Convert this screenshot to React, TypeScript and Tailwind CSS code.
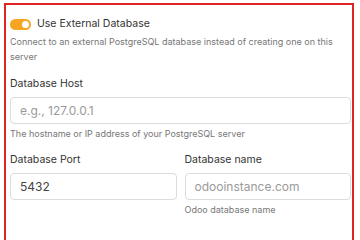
import React from "react";

function Field({ label, value, placeholder, help }: { label: string; value?: string; placeholder: string; help?: string }) {
  return (
    <div className="flex flex-col">
      <label className="text-[10.5px] leading-[14px] text-[#333]">{label}</label>
      <input
        readOnly
        defaultValue={value}
        placeholder={placeholder}
        className="mt-[6px] h-[27px] w-full rounded-[4px] border border-[#dcdcdc] bg-white px-[9px] text-[12px] text-[#444] placeholder:text-[#9a9a9a] outline-none"
      />
      {help && <p className="mt-[4px] text-[9px] leading-[12px] text-[#777]">{help}</p>}
    </div>
  );
}

export default function App() {
  return (
    <div className="h-[240px] overflow-hidden bg-white pl-1 pt-[3px]" style={{ fontFamily: "Inter, 'Noto Sans', sans-serif" }}>
      <div className="h-[260px] w-[350px] border-2 border-[#e02424] pl-1 pr-px pt-[12px]">
        <div className="flex h-[14px] items-center gap-[6px]">
          <span className="relative inline-block h-[11px] w-[21px] rounded-full bg-[#f5a524]">
            <span className="absolute right-[2px] top-[2px] h-[7px] w-[7px] rounded-full bg-white" />
          </span>
          <span className="text-[10.5px] text-[#333]">Use External Database</span>
        </div>
        <p className="mt-[3px] text-[9px] leading-[15px] text-[#777]">
          Connect to an external PostgreSQL database instead of creating one on this server
        </p>
        <div className="mt-[13px]">
          <Field label="Database Host" placeholder="e.g., 127.0.0.1" help="The hostname or IP address of your PostgreSQL server" />
        </div>
        <div className="mt-[13px] grid grid-cols-2 gap-[8px]">
          <Field label="Database Port" value="5432" placeholder="5432" />
          <Field label="Database name" placeholder="odooinstance.com" help="Odoo database name" />
        </div>
      </div>
    </div>
  );
}
